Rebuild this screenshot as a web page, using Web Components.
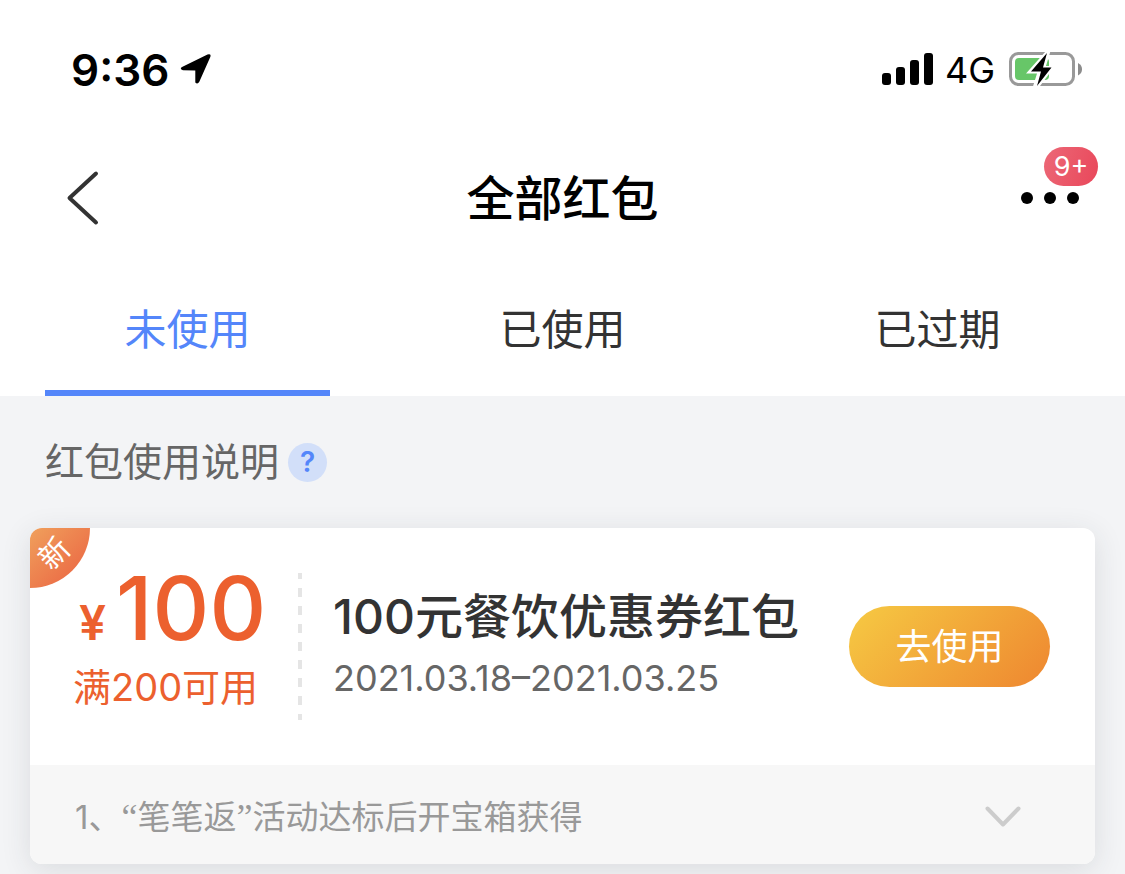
<!DOCTYPE html>
<html lang="zh-CN">
<head>
<meta charset="utf-8">
<meta name="viewport" content="width=device-width, initial-scale=1">
<title>全部红包</title>
<style>
  html { background: #f3f4f6; }
  body { margin: 0; font-family: Inter, "Noto Sans CJK SC", sans-serif; color: #333; }
</style>
</head>
<body>
<coupon-page></coupon-page>
<script>
const base = `*{box-sizing:border-box}
  button{font:inherit;color:inherit;background:none;border:0;padding:0;margin:0;cursor:pointer}
  svg{display:block}`;

function define(name, css, html) {
  const template = document.createElement('template');
  template.innerHTML = `<style>${base}${css}</style>${html}`;
  customElements.define(name, class extends HTMLElement {
    constructor() {
      super();
      this.attachShadow({ mode: 'open' }).append(template.content.cloneNode(true));
    }
  });
}

define('status-bar', `
  :host{display:flex;justify-content:space-between;align-items:center;height:132px;padding:8px 43px 0 71px;color:#000}
  .side{display:flex;align-items:center}
  .time{font-size:44px;font-weight:600;line-height:56px}
  .left{gap:11px}
  .right{gap:12px}
  .net{margin-right:2px;font-size:36px;line-height:44px}
`, `
  <div class="side left">
    <span class="time">9:36</span>
    <svg width="32" height="32" viewBox="0 0 32 32" aria-hidden="true"><path d="M2 13 27.500.4q4-1 2.800 2.600L19.200 28q-1.800 2.600-3.900.4V16.500L3 16.300Q-.8 15 2 13Z"/></svg>
  </div>
  <div class="side right">
    <svg width="51" height="34" viewBox="0 0 51 34" aria-hidden="true">
      <rect x="0" y="20" width="9" height="12" rx="3"/><rect x="14" y="14" width="9" height="18" rx="3"/>
      <rect x="28" y="7" width="9" height="25" rx="3"/><rect x="42" y="0" width="9" height="32" rx="3"/>
    </svg>
    <span class="net">4G</span>
    <svg width="73" height="38" viewBox="0 0 73 38" aria-hidden="true">
      <rect x="1.500" y="2.500" width="63" height="31" rx="8" fill="none" stroke="#999" stroke-width="3"/>
      <path d="M69 12v12.500q4-2 4-6.200t-4-6.300z" fill="#8c8c8c"/>
      <rect x="6" y="7" width="34" height="22" rx="4" fill="#67c668"/>
      <path d="M37 0 17 22.500h11L23.500 37h6L46 15H37L41.500 0Z" fill="#fff"/>
      <path d="M38 2 22 20.500h10L28 35 42.500 16.500H34Z" fill="#000"/>
    </svg>
  </div>`);

define('nav-bar', `
  :host{display:grid;grid-template-columns:1fr auto 1fr;align-items:center;height:132px;padding:0 44px}
  h1{margin:0;padding-top:2px;font-size:48px;font-weight:500;line-height:64px;color:#000}
  .back{width:60px;height:60px;padding-left:16px}
  .more{position:relative;justify-self:end;display:flex;align-items:center;height:60px}
  .badge{position:absolute;left:23px;top:-21px;width:54px;height:39px;border-radius:20px;
    background:linear-gradient(110deg,#ec6877,#e9475a);color:#fff;font-size:27px;line-height:39px;text-align:center}
`, `
  <button class="back" aria-label="返回"><svg width="44" height="60" viewBox="0 0 44 60" fill="none" stroke="#333" stroke-width="4" stroke-linecap="round" stroke-linejoin="round"><path d="M36 5.500 9.500 30 36 54.500"/></svg></button>
  <h1><slot></slot></h1>
  <button class="more" aria-label="更多">
    <svg width="60" height="12" viewBox="0 0 60 12"><circle cx="6" cy="6" r="6"/><circle cx="29" cy="6" r="6"/><circle cx="52" cy="6" r="6"/></svg>
    <span class="badge">9+</span>
  </button>`);

define('tab-item', `
  :host{display:flex;flex:1;padding:0 45px}
  button{flex:1;height:132px;padding-top:6px;font-size:42px;line-height:60px;border-bottom:6px solid transparent;color:#333}
  :host([active]) button{color:#5486fa;border-bottom-color:#5486fa}
`, `<button><slot></slot></button>`);

define('tab-bar', `:host{display:flex;height:132px}`, `<slot></slot>`);

define('usage-hint', `
  :host{display:flex;align-items:center;gap:9px;height:132px;padding:0 45px;color:#666;font-size:39px;line-height:56px}
  button{width:39px;height:39px;border-radius:50%;background:#d2dff9;color:#5486fa;font-size:28px;font-weight:600;line-height:39px;text-align:center}
`, `<span><slot></slot></span><button aria-label="查看说明">?</button>`);

define('quote-mark', `
  :host{font-family:"Liberation Serif",serif;font-size:36px;line-height:1}
`, `<slot></slot>`);

define('coupon-card', `
  :host{display:block;position:relative;border-radius:12px;overflow:hidden;background:#fff;box-shadow:0 6px 30px rgba(40,50,60,.12)}
  .main{display:flex;align-items:center;height:237px;padding-right:45px}
  .tag{position:absolute;left:0;top:0;width:60px;height:60px;border-bottom-right-radius:60px;
    background:linear-gradient(135deg,#f0a05c,#ea5f40);color:#fff}
  .tag span{display:block;width:48px;height:50px;font-size:30px;line-height:50px;text-align:center;transform:rotate(-45deg)}
  .value{width:268px;padding-left:43px;color:#ec602e;white-space:nowrap}
  .amount{display:flex;align-items:baseline;gap:10px;padding-left:6px;font-size:88px;font-weight:500;line-height:80px}
  .amount small{font-size:48px;font-weight:600;line-height:48px}
  .rule{font-size:38px;line-height:78px}
  .divider{width:4px;height:147px;background:repeating-linear-gradient(#e5e5e5 0 6px,transparent 6px 15px,#e5e5e5 15px 18px)}
  .info{flex:1;padding-left:31px;white-space:nowrap}
  h2{margin:0;font-size:48px;font-weight:500;line-height:62px;color:#333}
  .date{font-size:36px;line-height:60px;color:#666}
  .use{width:201px;height:81px;padding-bottom:6px;border-radius:41px;background:linear-gradient(135deg,#f6ca43,#ee8630);color:#fff;font-size:36px}
  .note{display:flex;align-items:center;justify-content:space-between;height:99px;padding:4px 74px 0 45px;background:#f7f7f7;color:#999;font-size:33px;line-height:48px}
`, `
  <div class="main">
    <div class="value">
      <div class="amount"><small>¥</small><slot name="amount"></slot></div>
      <div class="rule"><slot name="rule"></slot></div>
    </div>
    <div class="divider"></div>
    <div class="info">
      <h2><slot name="title"></slot></h2>
      <div class="date"><slot name="date"></slot></div>
    </div>
    <button class="use">去使用</button>
  </div>
  <div class="note">
    <span><slot name="note"></slot></span>
    <button aria-label="展开"><svg width="36" height="22" viewBox="0 0 36 22" fill="none" stroke="#ccc" stroke-width="4" stroke-linecap="round" stroke-linejoin="round"><path d="M2.500 2.500 18 18.500 33.500 2.500"/></svg></button>
  </div>
  <div class="tag"><span><slot name="tag"></slot></span></div>`);

define('coupon-page', `
  :host{display:block}
  header{background:#fff}
  main{padding-bottom:10px}
  coupon-card{margin:0 30px}
`, `
  <header>
    <status-bar></status-bar>
    <nav-bar>全部红包</nav-bar>
    <tab-bar><tab-item active>未使用</tab-item><tab-item>已使用</tab-item><tab-item>已过期</tab-item></tab-bar>
  </header>
  <main>
    <usage-hint>红包使用说明</usage-hint>
    <coupon-card>
      <span slot="tag">新</span>
      <span slot="amount">100</span>
      <span slot="rule">满200可用</span>
      <span slot="title">100元餐饮优惠券红包</span>
      <span slot="date">2021.03.18–2021.03.25</span>
      <span slot="note">1、<quote-mark>“</quote-mark>笔笔返<quote-mark>”</quote-mark>活动达标后开宝箱获得</span>
    </coupon-card>
  </main>`);
</script>
</body>
</html>
